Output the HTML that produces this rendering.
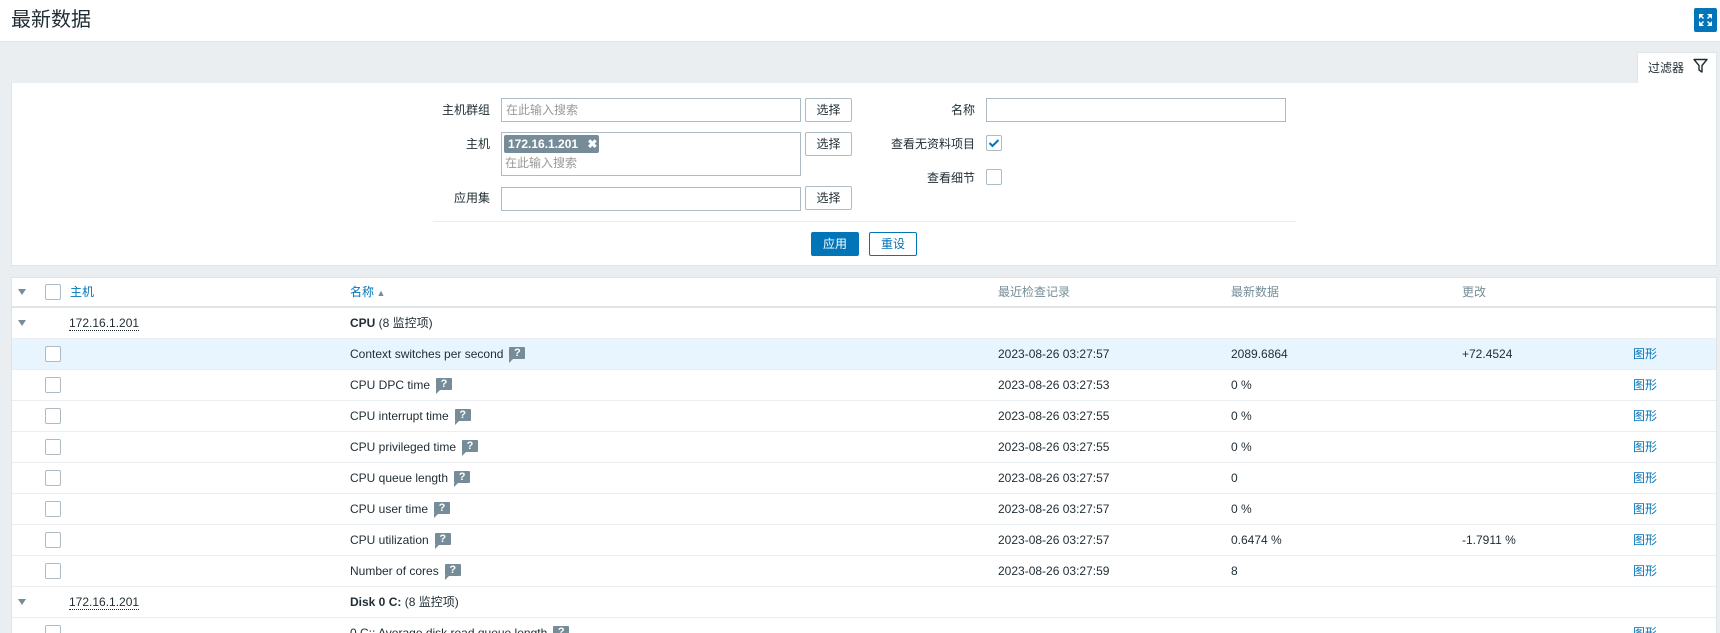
<!DOCTYPE html>
<html style="width:1720px;height:633px;overflow:hidden"><head><meta charset="utf-8">
<style>
*{box-sizing:border-box;margin:0;padding:0}
html,body{width:1720px;height:633px;overflow:hidden}
body{font-family:"Liberation Sans","Noto Sans CJK SC",sans-serif;font-size:12px;color:#1f2c33}
#w{position:relative;width:1720px;height:633px;overflow:hidden;background:#ebeef0}
.a{position:absolute}
.hdr{left:0;top:0;width:1720px;height:42px;background:#fff;border-bottom:1px solid #dfe4e7}
.title{left:11px;top:8px;font-size:20px;color:#1f2c33;line-height:24px}
.fs{left:1694px;top:8px;width:23px;height:24px;background:#0275b8;border-radius:2px}
.tab{left:1637px;top:52px;width:80px;height:32px;background:#fff;border:1px solid #dfe4e7;border-bottom:none}
.panel{left:11px;top:83px;width:1706px;height:183px;background:#fff;border:1px solid #dfe4e7;border-top:none}
.lbl{text-align:right;width:100px;line-height:14px}
.inp{border:1px solid #acbbc4;background:#fff;height:24px}
.ph{color:#999;line-height:22px;padding-left:4px}
.btn{border:1px solid #acbbc4;border-radius:2px;background:#fff;height:24px;width:47px;text-align:center;line-height:22px}
.cb{width:16px;height:16px;border:1px solid #acbbc4;border-radius:2px;background:#fff}
.tbl{left:11px;top:277px;width:1706px;height:356px;background:#fff;border:1px solid #dfe4e7;border-bottom:none}
.row{left:12px;width:1704px;height:31px;border-bottom:1px solid #ebeef0}
.t{position:absolute;top:0;line-height:30px;white-space:nowrap}
.tri{position:absolute;left:6px;top:12px;width:0;height:0;border-left:4px solid transparent;border-right:4px solid transparent;border-top:6px solid #768d99}
.rcb{position:absolute;left:33px;top:7px;width:16px;height:16px;border:1px solid #acbbc4;border-radius:2px;background:#fff}
.h{display:inline-block;position:relative;width:16px;height:12px;background:#768d99;border-radius:1px;color:#fff;font-weight:bold;font-size:11px;line-height:12px;text-align:center;vertical-align:middle;margin-left:6px;top:-2px;font-style:normal}
.h:after{content:"";position:absolute;left:0;bottom:-4px;border-left:4px solid #768d99;border-bottom:4px solid transparent}
.lnk{color:#0275b8}
.ip{border-bottom:1px dotted #1f2c33;line-height:14px;top:8px}
</style></head><body><div id="w">
<div class="a hdr"></div>
<div class="a title">最新数据</div>
<div class="a fs"><svg width="23" height="24" viewBox="0 0 23 24"><g fill="#fff"><path d="M5 6h5l-2 2 2 2-1 1-2-2-2 2z"/><path d="M18 6h-5l2 2-2 2 1 1 2-2 2 2z"/><path d="M5 18h5l-2-2 2-2-1-1-2 2-2-2z"/><path d="M18 18h-5l2-2-2-2 1-1 2 2 2-2z"/></g></svg></div>
<div class="a tab"><span class="a" style="left:10px;top:8px;line-height:14px">过滤器</span>
<svg class="a" style="left:55px;top:5px" width="15" height="16" viewBox="0 0 15 16"><path d="M1 1.5h13l-5 6v6.5l-3-2v-4.5z" fill="none" stroke="#1f2c33" stroke-width="1.4" stroke-linejoin="round"/></svg></div>
<div class="a panel"></div>
<div class="a lbl" style="left:390px;top:103px">主机群组</div>
<div class="a inp ph" style="left:501px;top:98px;width:300px">在此输入搜索</div>
<div class="a btn" style="left:805px;top:98px">选择</div>
<div class="a lbl" style="left:390px;top:137px">主机</div>
<div class="a inp" style="left:501px;top:132px;width:300px;height:44px"></div>
<div class="a" style="left:504px;top:135px;width:95px;height:18px;background:#768d99;border-radius:2px;color:#fff;font-weight:bold;line-height:18px;padding-left:4px">172.16.1.201 <span style="margin-left:6px">✖</span></div>
<div class="a ph" style="left:501px;top:152px">在此输入搜索</div>
<div class="a btn" style="left:805px;top:132px">选择</div>
<div class="a lbl" style="left:390px;top:191px">应用集</div>
<div class="a inp" style="left:501px;top:187px;width:300px"></div>
<div class="a btn" style="left:805px;top:186px">选择</div>
<div class="a lbl" style="left:875px;top:103px">名称</div>
<div class="a inp" style="left:986px;top:98px;width:300px"></div>
<div class="a lbl" style="left:775px;top:137px;width:200px">查看无资料项目</div>
<div class="a cb" style="left:986px;top:135px"><svg width="14" height="14" viewBox="0 0 14 14" style="display:block"><path d="M2.5 7l3 3 6-6" fill="none" stroke="#0275b8" stroke-width="2"/></svg></div>
<div class="a lbl" style="left:875px;top:171px">查看细节</div>
<div class="a cb" style="left:986px;top:169px"></div>
<div class="a" style="left:433px;top:221px;width:863px;height:1px;background:#ebeef0"></div>
<div class="a btn" style="left:811px;top:232px;width:48px;background:#0275b8;border-color:#0275b8;color:#fff">应用</div>
<div class="a btn" style="left:869px;top:232px;width:48px;border-color:#0275b8;color:#0275b8">重设</div>

<div class="a tbl"></div>
<div class="a row" style="top:277px;height:31px;border-bottom:2px solid #dfe4e7">
<div class="tri"></div><div class="rcb"></div>
<span class="t lnk" style="left:58px">主机</span>
<span class="t lnk" style="left:338px">名称<span style="font-size:9px;color:#768d99"> ▲</span></span>
<span class="t" style="left:986px;color:#768d99">最近检查记录</span>
<span class="t" style="left:1219px;color:#768d99">最新数据</span>
<span class="t" style="left:1450px;color:#768d99">更改</span>
</div>
<div class="a row" style="top:308px"><div class="tri"></div><span class="t ip" style="left:57px">172.16.1.201</span><span class="t" style="left:338px"><b>CPU</b> (8 监控项)</span></div>

<div class="a row" style="top:339px;background:#e8f5ff"><div class="rcb"></div><span class="t" style="left:338px">Context switches per second<i class="h">?</i></span><span class="t" style="left:986px">2023-08-26 03:27:57</span><span class="t" style="left:1219px">2089.6864</span><span class="t" style="left:1450px">+72.4524</span><span class="t lnk" style="left:1621px">图形</span></div>
<div class="a row" style="top:370px"><div class="rcb"></div><span class="t" style="left:338px">CPU DPC time<i class="h">?</i></span><span class="t" style="left:986px">2023-08-26 03:27:53</span><span class="t" style="left:1219px">0 %</span><span class="t lnk" style="left:1621px">图形</span></div>
<div class="a row" style="top:401px"><div class="rcb"></div><span class="t" style="left:338px">CPU interrupt time<i class="h">?</i></span><span class="t" style="left:986px">2023-08-26 03:27:55</span><span class="t" style="left:1219px">0 %</span><span class="t lnk" style="left:1621px">图形</span></div>
<div class="a row" style="top:432px"><div class="rcb"></div><span class="t" style="left:338px">CPU privileged time<i class="h">?</i></span><span class="t" style="left:986px">2023-08-26 03:27:55</span><span class="t" style="left:1219px">0 %</span><span class="t lnk" style="left:1621px">图形</span></div>
<div class="a row" style="top:463px"><div class="rcb"></div><span class="t" style="left:338px">CPU queue length<i class="h">?</i></span><span class="t" style="left:986px">2023-08-26 03:27:57</span><span class="t" style="left:1219px">0</span><span class="t lnk" style="left:1621px">图形</span></div>
<div class="a row" style="top:494px"><div class="rcb"></div><span class="t" style="left:338px">CPU user time<i class="h">?</i></span><span class="t" style="left:986px">2023-08-26 03:27:57</span><span class="t" style="left:1219px">0 %</span><span class="t lnk" style="left:1621px">图形</span></div>
<div class="a row" style="top:525px"><div class="rcb"></div><span class="t" style="left:338px">CPU utilization<i class="h">?</i></span><span class="t" style="left:986px">2023-08-26 03:27:57</span><span class="t" style="left:1219px">0.6474 %</span><span class="t" style="left:1450px">-1.7911 %</span><span class="t lnk" style="left:1621px">图形</span></div>
<div class="a row" style="top:556px"><div class="rcb"></div><span class="t" style="left:338px">Number of cores<i class="h">?</i></span><span class="t" style="left:986px">2023-08-26 03:27:59</span><span class="t" style="left:1219px">8</span><span class="t lnk" style="left:1621px">图形</span></div>
<div class="a row" style="top:587px"><div class="tri"></div><span class="t ip" style="left:57px">172.16.1.201</span><span class="t" style="left:338px"><b>Disk 0 C:</b> (8 监控项)</span></div>
<div class="a row" style="top:618px;height:15px;overflow:hidden;border-bottom:none"><div class="rcb"></div><span class="t" style="left:338px">0 C:: Average disk read queue length<i class="h">?</i></span><span class="t lnk" style="left:1621px">图形</span></div>
</div></body></html>
